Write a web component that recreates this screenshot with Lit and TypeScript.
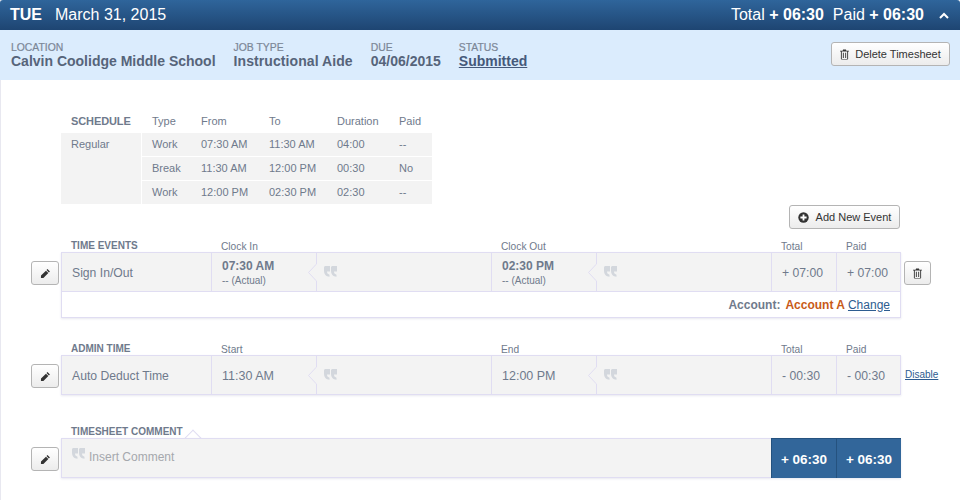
import { LitElement, html, css, svg } from "lit";
import { customElement } from "lit/decorators.js";

const pencil = html`<svg class="ic" width="11" height="11" viewBox="0 0 12 12"><path fill="#333" d="M8.200 1.200 10.800 3.800 9.700 4.900 7.100 2.300ZM6.500 2.900 9.100 5.500 3.700 10.900 1 11 1.100 8.300Z"/></svg>`;
const trash = html`<svg class="ic tr" viewBox="0 0 10 12"><path fill="#333" fill-rule="evenodd" d="M3.400.5h3.200l.5 1.200H10v1H9v8.200l-.7.6H1.700L1 10.900V2.700H0v-1h2.900ZM2 2.700v8.200h6V2.700ZM3.200 4h1v6h-1Zm2.600 0h1v6h-1Z"/></svg>`;
const plus = html`<svg class="ic" width="11" height="11" viewBox="0 0 11 11"><circle cx="5.500" cy="5.500" r="5.200" fill="#333"/><path fill="#fff" d="M4.600 2.400h1.800v2.200h2.200v1.800H6.400v2.200H4.600V6.400H2.400V4.600h2.200Z"/></svg>`;
const quote = html`<svg class="q" width="13" height="11" viewBox="0 0 13 11"><path fill="#d3d7dd" d="M1.500 0H6V5.500H3C3 7 3.500 8 5.500 8.700V10.800C2 10.600 0 8 0 4.500V1.500C0 .7.700 0 1.500 0ZM8.500 0H13V5.500H10C10 7 10.500 8 12.500 8.700V10.800C9 10.600 7 8 7 4.500V1.500C7 .7 7.700 0 8.500 0Z"/></svg>`;
const notch = svg`<svg class="notch" width="11" height="40" viewBox="0 0 11 40"><path fill="#f3f3f3" stroke="#e0ddf2" stroke-width="1" d="M10.500 12 2.500 20.500l8 8.500"/><rect x="10" y="12.500" width="1" height="16" fill="#f3f3f3"/></svg>`;

@customElement("app-root")
export class AppRoot extends LitElement {
  static styles = css`
    :host { display: block; width: 960px; height: 500px; overflow: hidden; background: #fff;
      font-family: "Liberation Sans", Arial, sans-serif; color: #6f7a8c; box-shadow: inset 1px 0 0 #e8e8f0; }
    * { box-sizing: border-box; }
    .top { height: 30px; display: flex; align-items: center; padding: 0 11px 0 10px; color: #fff;
      background: linear-gradient(#2f659b, #1e4572); font-size: 16px; border-radius: 3px 3px 0 0; }
    .top b { font-weight: 700; margin-right: 13px; }
    .top .date { flex: 1; }
    .top .sum b { margin: 0; }
    .top .sum { margin-right: 10px; }
    .chev { margin-left: 5px; }
    .sub { height: 50px; background: #dbecfd; display: flex; align-items: flex-start; padding: 12px 10px 0 11px; }
    .meta { display: flex; flex-direction: column; margin-right: 18px; }
    .meta small { font-size: 10.400px; font-weight: 400; line-height: 11px; color: #7b8797; -webkit-text-stroke: .2px #7b8797; }
    .meta span { font-size: 14px; font-weight: 700; line-height: 16px; color: #56647a; }
    .meta span.sp { letter-spacing: .08px; }
    .meta a { font-size: 14px; font-weight: 700; line-height: 16px; color: #45597a; text-decoration: underline; }
    .sub .btn { margin-left: auto; }
    .btn { display: inline-flex; align-items: center; justify-content: center; height: 24px; border: 1px solid #b4b4b4;
      border-radius: 3px; background: linear-gradient(#fff, #ececec); color: #333; font-size: 11px; }
    .del { width: 119px; gap: 6px; }
    .del .tr { width: 9px; height: 11px; }
    .add { width: 111px; gap: 7px; }
    .sq { width: 28px; flex: none; }
    .sq .tr { width: 9px; height: 11px; }
    .ic { display: block; flex: none; }
    .page { padding: 0 0 0 61px; }
    .sched { margin-top: 30px; width: 371px; font-size: 11px; line-height: 23px; color: #6f7a8c; }
    .sh { display: grid; grid-template-columns: 81px 49px 68px 68px 62px 33px; padding-left: 10px; height: 23px; }
    .sh b { font-weight: 700; color: #6f7a8c; letter-spacing: -.1px; }
    .sbody { display: grid; grid-template-columns: 80px 1fr; gap: 0 1px; height: 71px; }
    .sl { background: #f3f3f3; padding: 0 10px; }
    .srows { display: flex; flex-direction: column; gap: 1px; }
    .rr { flex: 1; display: grid; grid-template-columns: 49px 68px 68px 62px 33px; background: #f3f3f3; padding-left: 10px; }
    .addrow { display: flex; justify-content: flex-end; width: 839px; margin-top: 1px; }
    .labels { display: grid; grid-template-columns: 150px 280px 280px 65px 65px; width: 840px; font-size: 10.200px; line-height: 12px; align-items: end; }
    .labels b { font-size: 10px; font-weight: 700; padding-left: 10px; color: #6f7a8c; }
    .labels span { padding-left: 10px; margin-bottom: -1px; }
    .line { display: flex; align-items: flex-start; margin-left: -30px; }
    .edit { margin: 9px 2px 0 0; }
    .box { width: 840px; border: 1px solid #e0ddf2; box-shadow: 0 1px 2px rgba(90,90,140,.14); flex: none; }
    .cells { display: grid; grid-template-columns: 149px 105px 175px 105px 175px 65px 64px; background: #f3f3f3; height: 38px; }
    .cell { border-left: 1px solid #e0ddf2; display: flex; flex-direction: column; justify-content: center; padding-left: 10px; position: relative; font-size: 12px; color: #6f7a8c; }
    .cell:first-child { border-left: 0; }
    .name { font-size: 12.200px; padding-left: 10px; padding-top: 1px; }
    .time { padding-top: 2px; }
    .time b { font-size: 12px; line-height: 15px; color: #6f7a8c; }
    .time small { font-size: 10px; line-height: 13px; color: #6f7a8c; }
    .time.plain { font-size: 12.500px; padding-top: 1px; }
    .note { padding: 0 0 2px 7px; }
    .notch { position: absolute; left: -11px; top: -1px; }
    .num { font-size: 12.200px; padding-left: 10px; padding-top: 2px; }
    .acct { height: 26px; border-top: 1px solid #e0ddf2; display: flex; align-items: center; justify-content: flex-end; padding-right: 10px; gap: 5px; font-size: 12px; background: #fff; }
    .acct b { font-weight: 700; }
    .acct .o { color: #c85a17; }
    .acct a, .dis { color: #2d5c90; text-decoration: underline; }
    .acct a { margin-left: -2px; }
    .side { margin: 9px 0 0 3px; width: 27px; }
    .dis { font-size: 10px; margin: 14px 0 0 4px; line-height: 12px; }
    .s1 { margin-top: 11px; }
    .s2 { margin-top: 25px; }
    .s3 { margin-top: 31px; position: relative; }
    .clabel { font-size: 10px; font-weight: 700; padding-left: 10px; line-height: 12px; color: #6f7a8c; height: 12px; }
    .tip { position: absolute; left: 126px; top: 6px; width: 12px; height: 12px; background: #fff; border-left: 1px solid #e0ddf2; border-top: 1px solid #e0ddf2; transform: rotate(45deg); }
    .box.c { position: relative; border-right: 0; }
    .cm { display: grid; grid-template-columns: 709px 65px 65px; height: 38px; background: #f3f3f3; }
    .cm .in { display: flex; align-items: flex-start; gap: 4px; padding: 10px 0 0 10px; font-size: 12px; color: #a5a8ad; line-height: 16px; }
    .cm .in svg { margin-top: -1px; }
    .tot { background: #32669a; color: #fff; font-weight: 700; font-size: 13.500px; display: flex; align-items: center; justify-content: center;
      border-left: 1px solid #25527f; border-top: 1px solid #25527f; height: 40px; margin-top: -1px; padding-top: 1px; }
  `;

  cellsRow(name: string, a: unknown, b: unknown, t: string) {
    return html`<div class="cells">
      <div class="cell name">${name}</div>
      <div class="cell time ${typeof a === "string" ? "plain" : ""}">${a}</div>
      <div class="cell note">${notch}${quote}</div>
      <div class="cell time ${typeof b === "string" ? "plain" : ""}">${b}</div>
      <div class="cell note">${notch}${quote}</div>
      <div class="cell num">${t}</div>
      <div class="cell num">${t}</div>
    </div>`;
  }

  render() {
    const rows = [
      ["Work", "07:30 AM", "11:30 AM", "04:00", "--"],
      ["Break", "11:30 AM", "12:00 PM", "00:30", "No"],
      ["Work", "12:00 PM", "02:30 PM", "02:30", "--"],
    ];
    return html`
      <div class="top">
        <b>TUE</b><span class="date">March 31, 2015</span>
        <span class="sum">Total <b>+ 06:30</b>&nbsp; Paid <b>+ 06:30</b></span>
        <svg class="chev" width="10" height="7" viewBox="0 0 10 7"><path fill="none" stroke="#fff" stroke-width="2" d="M1 6 5 2l4 4"/></svg>
      </div>
      <div class="sub">
        <div class="meta"><small>LOCATION</small><span>Calvin Coolidge Middle School</span></div>
        <div class="meta"><small>JOB TYPE</small><span class="sp">Instructional Aide</span></div>
        <div class="meta"><small>DUE</small><span>04/06/2015</span></div>
        <div class="meta"><small>STATUS</small><a>Submitted</a></div>
        <div class="btn del">${trash}Delete Timesheet</div>
      </div>
      <div class="page">
        <div class="sched">
          <div class="sh"><b>SCHEDULE</b><span>Type</span><span>From</span><span>To</span><span>Duration</span><span>Paid</span></div>
          <div class="sbody">
            <div class="sl">Regular</div>
            <div class="srows">${rows.map((r) => html`<div class="rr">${r.map((c) => html`<span>${c}</span>`)}</div>`)}</div>
          </div>
        </div>
        <div class="addrow"><div class="btn add">${plus}Add New Event</div></div>
        <div class="s1">
          <div class="labels"><b>TIME EVENTS</b><span>Clock In</span><span>Clock Out</span><span>Total</span><span>Paid</span></div>
          <div class="line">
            <div class="btn sq edit">${pencil}</div>
            <div class="box">
              ${this.cellsRow("Sign In/Out",
                html`<b>07:30 AM</b><small>-- (Actual)</small>`,
                html`<b>02:30 PM</b><small>-- (Actual)</small>`, "+ 07:00")}
              <div class="acct"><b>Account:</b><b class="o">Account A</b><a>Change</a></div>
            </div>
            <div class="btn sq side">${trash}</div>
          </div>
        </div>
        <div class="s2">
          <div class="labels"><b>ADMIN TIME</b><span>Start</span><span>End</span><span>Total</span><span>Paid</span></div>
          <div class="line">
            <div class="btn sq edit">${pencil}</div>
            <div class="box">${this.cellsRow("Auto Deduct Time", "11:30 AM", "12:00 PM", "- 00:30")}</div>
            <a class="dis">Disable</a>
          </div>
        </div>
        <div class="s3">
          <div class="clabel">TIMESHEET COMMENT</div>
          <div class="tip"></div>
          <div class="line">
            <div class="btn sq edit">${pencil}</div>
            <div class="box c"><div class="cm">
              <div class="in">${quote}Insert Comment</div>
              <div class="tot">+ 06:30</div><div class="tot">+ 06:30</div>
            </div></div>
          </div>
        </div>
      </div>
    `;
  }
}
